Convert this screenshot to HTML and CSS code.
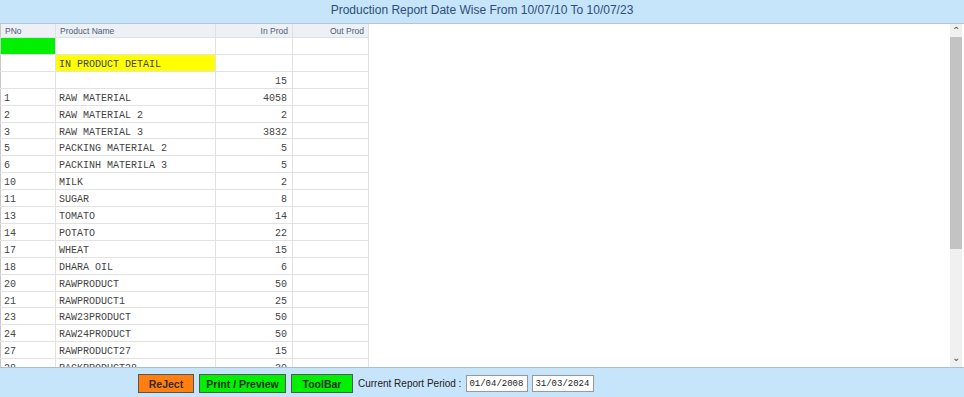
FILE: index.html
```html
<!DOCTYPE html>
<html lang="en">
<head>
    <meta charset="UTF-8">
    <title>Production Report</title>
    <link rel="stylesheet" href="styles.css">
</head>
<body>
    <header class="title-bar">Production Report Date Wise From 10/07/10 To 10/07/23</header>

    <main class="report">
        <div class="grid-wrap">
            <table class="grid">
                <thead>
                    <tr>
                        <th class="c-no">PNo</th>
                        <th class="c-name">Product Name</th>
                        <th class="c-num">In Prod</th>
                        <th class="c-num c-out">Out Prod</th>
                    </tr>
                </thead>
                <tbody>
                    <tr><td class="green"></td><td></td><td></td><td></td></tr>
                    <tr><td></td><td class="yellow">IN PRODUCT DETAIL</td><td></td><td></td></tr>
                    <tr><td></td><td></td><td class="num">15</td><td></td></tr>
                    <tr><td>1</td><td>RAW MATERIAL</td><td class="num">4058</td><td></td></tr>
                    <tr><td>2</td><td>RAW MATERIAL 2</td><td class="num">2</td><td></td></tr>
                    <tr><td>3</td><td>RAW MATERIAL 3</td><td class="num">3832</td><td></td></tr>
                    <tr><td>5</td><td>PACKING MATERIAL 2</td><td class="num">5</td><td></td></tr>
                    <tr><td>6</td><td>PACKINH MATERILA 3</td><td class="num">5</td><td></td></tr>
                    <tr><td>10</td><td>MILK</td><td class="num">2</td><td></td></tr>
                    <tr><td>11</td><td>SUGAR</td><td class="num">8</td><td></td></tr>
                    <tr><td>13</td><td>TOMATO</td><td class="num">14</td><td></td></tr>
                    <tr><td>14</td><td>POTATO</td><td class="num">22</td><td></td></tr>
                    <tr><td>17</td><td>WHEAT</td><td class="num">15</td><td></td></tr>
                    <tr><td>18</td><td>DHARA OIL</td><td class="num">6</td><td></td></tr>
                    <tr><td>20</td><td>RAWPRODUCT</td><td class="num">50</td><td></td></tr>
                    <tr><td>21</td><td>RAWPRODUCT1</td><td class="num">25</td><td></td></tr>
                    <tr><td>23</td><td>RAW23PRODUCT</td><td class="num">50</td><td></td></tr>
                    <tr><td>24</td><td>RAW24PRODUCT</td><td class="num">50</td><td></td></tr>
                    <tr><td>27</td><td>RAWPRODUCT27</td><td class="num">15</td><td></td></tr>
                    <tr><td>28</td><td>PACKPRODUCT28</td><td class="num">30</td><td></td></tr>
                </tbody>
            </table>
        </div>

        <!-- scrollbar -->
        <div class="scrollbar">
            <div class="arrow">&#8963;</div>
            <div class="thumb"></div>
            <div class="arrow arrow-down">&#8964;</div>
        </div>
    </main>

    <footer class="tool-bar">
        <button class="btn btn-orange">ReJect</button>
        <button class="btn btn-green btn-print">Print / Preview</button>
        <button class="btn btn-green btn-tool">ToolBar</button>
        <span class="period-label">Current Report Period :</span>
        <input class="date-box" type="text" value="01/04/2008">
        <input class="date-box" type="text" value="31/03/2024">
    </footer>
</body>
</html>
```

FILE: styles.css
```css
/* General */
body {
    margin: 0;
    width: 964px;
    height: 397px;
    display: flex;
    flex-direction: column;
    background: #c6e4fa;
    font-family: "Liberation Sans", Arial, sans-serif;
    overflow: hidden;
}

.title-bar {
    height: 23px;
    line-height: 20px;
    text-align: center;
    font-size: 12px;
    color: #2d4e79;
    border-bottom: 1px solid #b4c4d2;
}

/* Report area */
.report {
    display: flex;
    height: 343px;
    background: #fff;
    border-bottom: 1px solid #aebccb;
}

.grid-wrap {
    flex: 1;
    overflow: hidden;
}

.grid {
    border-collapse: collapse;
    table-layout: fixed;
    width: 369px;
    border-left: 1px solid #c8c8c8;
}

.grid th {
    height: 13px;
    padding: 0 4px;
    font-size: 8.5px;
    font-weight: normal;
    color: #4d5d74;
    background: #edf0f4;
    text-align: left;
    border-right: 1px solid #dde1e6;
    border-bottom: 1px solid #dde1e6;
    white-space: nowrap;
}

.grid .c-no { width: 46px; }
.grid .c-name { width: 151px; }
.grid .c-num { width: 68px; text-align: right; }
.grid .c-out { width: 67px; }

.grid tbody tr {
    height: 16.9px;
}

.grid td {
    padding: 4px 3px 0;
    line-height: 11.9px;
    vertical-align: top;
    font-family: "Liberation Mono", "Courier New", monospace;
    font-size: 10px;
    color: #444;
    border-right: 1px solid #e2e2e2;
    border-bottom: 1px solid #e2e2e2;
    white-space: nowrap;
    overflow: hidden;
}

.grid td.num {
    text-align: right;
    padding-right: 5px;
}

.grid td.green { background: #00f000; }
.grid td.yellow { background: #ffff00; }

/* Scrollbar */
.scrollbar {
    width: 12px;
    margin-right: 2px;
    display: flex;
    flex-direction: column;
    background: #f0f0f0;
}

.scrollbar .arrow {
    height: 13px;
    font-size: 10px;
    line-height: 13px;
    text-align: center;
    color: #505050;
}

.scrollbar .thumb {
    height: 212px;
    background: #c3c3c3;
}

.scrollbar .arrow-down {
    margin-top: auto;
    line-height: 8px;
}

/* Bottom toolbar */
.tool-bar {
    flex: 1;
    display: flex;
    align-items: center;
    padding-left: 138px;
    padding-top: 2px;
    font-size: 10px;
    color: #222;
}

.btn {
    height: 19px;
    margin-right: 5px;
    padding: 0;
    font-family: "Liberation Sans", Arial, sans-serif;
    font-size: 10.5px;
    font-weight: bold;
    color: #3a2a1a;
    border: 1px solid #555;
}

.btn-orange {
    width: 56px;
    background: #ff8010;
}

.btn-green {
    background: #00f000;
    color: #163316;
}

.btn-print { width: 87px; }
.btn-tool { width: 62px; }

.period-label {
    margin-right: 5px;
}

.date-box {
    width: 56px;
    height: 13px;
    margin-right: 4px;
    padding: 1px 2px;
    font-family: "Liberation Mono", "Courier New", monospace;
    font-size: 9px;
    color: #222;
    border: 1px solid #999;
    background: #fff;
}
```
